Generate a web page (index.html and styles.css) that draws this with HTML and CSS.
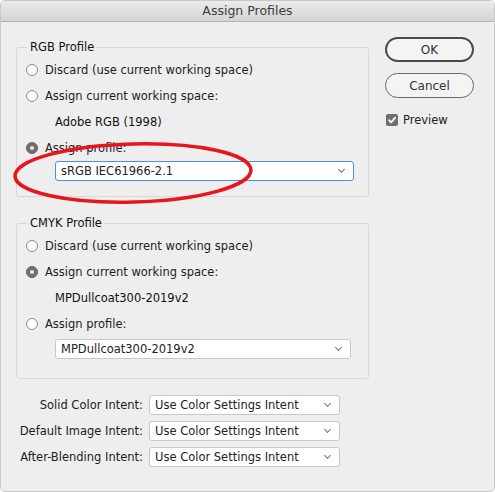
FILE: index.html
```html
<!DOCTYPE html>
<html>
<head>
<meta charset="utf-8">
<link rel="stylesheet" href="styles.css">
</head>
<body>
<div class="window">
  <div class="titlebar">Assign Profiles</div>
  <div class="content">
    <div class="left">
      <fieldset class="group rgb">
        <legend>RGB Profile</legend>
        <div class="row"><span class="radio"></span>Discard (use current working space)</div>
        <div class="row"><span class="radio"></span>Assign current working space:</div>
        <div class="row indent value">Adobe RGB (1998)</div>
        <div class="row"><span class="radio on"></span>Assign profile:</div>
        <div class="select focus indent"><span>sRGB IEC61966-2.1</span><span class="chev"></span></div>
      </fieldset>
      <fieldset class="group cmyk">
        <legend>CMYK Profile</legend>
        <div class="row"><span class="radio"></span>Discard (use current working space)</div>
        <div class="row"><span class="radio on"></span>Assign current working space:</div>
        <div class="row indent value">MPDullcoat300-2019v2</div>
        <div class="row"><span class="radio"></span>Assign profile:</div>
        <div class="select indent narrow"><span>MPDullcoat300-2019v2</span><span class="chev"></span></div>
      </fieldset>
      <div class="intents">
        <label>Solid Color Intent:</label>
        <div class="select"><span>Use Color Settings Intent</span><span class="chev"></span></div>
        <label>Default Image Intent:</label>
        <div class="select"><span>Use Color Settings Intent</span><span class="chev"></span></div>
        <label>After-Blending Intent:</label>
        <div class="select"><span>Use Color Settings Intent</span><span class="chev"></span></div>
      </div>
    </div>
    <div class="right">
      <div class="button default">OK</div>
      <div class="button">Cancel</div>
      <div class="check-row"><span class="checkbox"><svg width="12" height="12" viewBox="0 0 12 12"><path d="M3 6.2 L5 8.3 L9.2 3.6" fill="none" stroke="#fff" stroke-width="1.8" stroke-linecap="round" stroke-linejoin="round"/></svg></span>Preview</div>
    </div>
  </div>
  <svg class="annotation" width="250" height="70" viewBox="0 0 250 70">
    <ellipse cx="120" cy="31" rx="118" ry="29" fill="none" stroke="#e8151c" stroke-width="3.5" transform="rotate(-1.5 120 31)"/>
  </svg>
</div>
</body>
</html>
```
FILE: styles.css
```css
* { box-sizing: border-box; }
html, body { margin: 0; padding: 0; background: #fff; }
body {
  font-family: "DejaVu Sans", "Liberation Sans", sans-serif;
  font-size: 11.5px;
  color: #1c1c1c;
}
.window {
  position: relative;
  width: 495px;
  height: 492px;
  background: #eeeeee;
  border: 1px solid #c9c9c9;
  border-radius: 5px;
  overflow: hidden;
}
.titlebar {
  height: 21px;
  line-height: 20px;
  text-align: center;
  font-size: 12.5px;
  color: #3d3d3d;
  background: linear-gradient(#ebebeb, #d4d4d4);
  border-bottom: 1px solid #b3b3b3;
}
.content {
  display: flex;
  padding-left: 15px;
}
.left {
  width: 353px;
}
.group {
  margin: 0;
  border: 1px solid #d8d8d8;
  border-radius: 3px;
  padding: 3px 0 0 9px;
  min-width: 0;
}
.group legend {
  padding: 0 3px;
  margin-left: 1px;
  font-size: 11.5px;
  line-height: 14px;
  color: #111;
}
.rgb { margin-top: 18px; height: 157px; }
.cmyk { margin-top: 19px; height: 163px; }
.row {
  height: 26px;
  display: flex;
  align-items: center;
  white-space: nowrap;
}
.indent { margin-left: 29px; }
.value { color: #111; }
.radio {
  width: 12px;
  height: 12px;
  border-radius: 50%;
  border: 1px solid #8c8c8c;
  background: #fff;
  margin-right: 7px;
  flex: none;
  display: inline-flex;
  align-items: center;
  justify-content: center;
}
.radio.on {
  background: #707070;
  border-color: #666;
}
.radio.on::after {
  content: "";
  width: 4px;
  height: 4px;
  border-radius: 50%;
  background: #e8e8e8;
}
.select {
  height: 20px;
  background: #fff;
  border: 1px solid #c8c8c8;
  border-radius: 3px;
  display: flex;
  align-items: center;
  justify-content: space-between;
  padding: 0 9px 0 5px;
  white-space: nowrap;
  color: #222;
}
.rgb .select { width: 299px; margin-top: 0; }
.select.focus { border-color: #4b8fe0; }
.cmyk .select { width: 296px; margin-top: 2px; }
.chev {
  width: 5px;
  height: 5px;
  border-right: 1px solid #777;
  border-bottom: 1px solid #777;
  transform: rotate(45deg);
  margin-top: -3px;
}
.intents {
  margin-top: 16px;
  display: grid;
  grid-template-columns: 127px 191px;
  column-gap: 6px;
  row-gap: 6px;
  align-items: center;
}
.intents label {
  text-align: right;
  white-space: nowrap;
}
.right {
  margin-left: 16px;
  padding-top: 15px;
  width: 89px;
}
.button {
  height: 25px;
  border: 1px solid #6a6a6a;
  border-radius: 13px;
  display: flex;
  align-items: center;
  justify-content: center;
  font-size: 12px;
  color: #333;
  background: #f4f4f4;
  margin-bottom: 11px;
}
.button.default {
  border: 2px solid #4a4a4a;
}
.check-row {
  display: flex;
  align-items: center;
  font-size: 11.5px;
  color: #222;
  margin-left: 1px;
  margin-top: 15px;
}
.checkbox {
  width: 12px;
  height: 12px;
  border-radius: 2px;
  background: #6f6f6f;
  margin-right: 5px;
  display: inline-flex;
}
.annotation {
  position: absolute;
  left: 12px;
  top: 141px;
}
```
